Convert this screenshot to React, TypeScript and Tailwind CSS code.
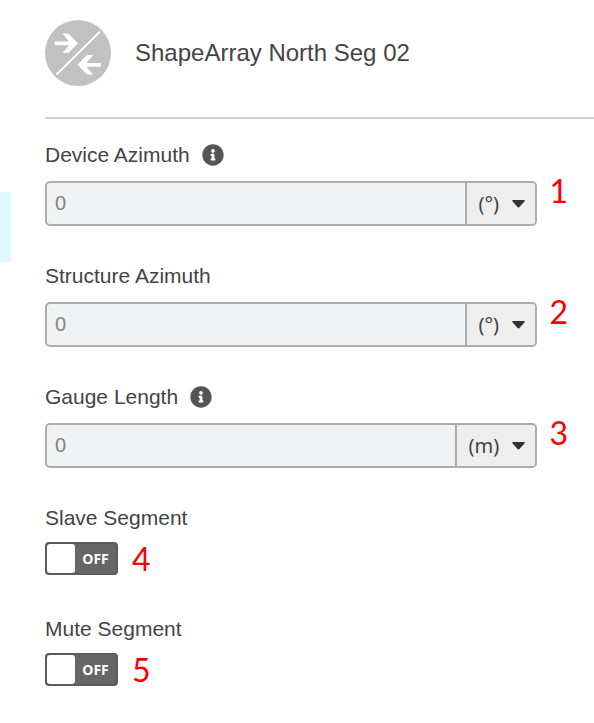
import { useState } from "react";
import { FaInfoCircle } from "react-icons/fa";

type NumberField = {
  id: string;
  label: string;
  unit: string;
  info?: boolean;
  step: string;
};

const FIELDS: NumberField[] = [
  { id: "device-azimuth", label: "Device Azimuth", unit: "(°)", info: true, step: "1" },
  { id: "structure-azimuth", label: "Structure Azimuth", unit: "(°)", step: "2" },
  { id: "gauge-length", label: "Gauge Length", unit: "(m)", info: true, step: "3" },
];

const TOGGLES = [
  { id: "slave-segment", label: "Slave Segment", step: "4" },
  { id: "mute-segment", label: "Mute Segment", step: "5" },
];

function SegmentIcon() {
  return (
    <svg viewBox="0 0 66 66" className="size-[66px] shrink-0" aria-hidden="true">
      <circle cx="33" cy="33" r="33" fill="#c1c1c1" />
      <path d="M11.500 54.500 55 11.500" stroke="#fff" strokeWidth="1.800" />
      <path d="M9.700 21.400h14.300l-6.500-8h6L33 23.300l-9.500 9.700h-6l6.500-7.800H9.700z" fill="#fff" />
      <path d="M56 42.900H41.500l6.500-8h-6L32.500 44.800 42 54.500h6l-6.500-7.800H56z" fill="#fff" />
    </svg>
  );
}

// Red callout number that refers to the manual's step list
function Callout({ children }: { children: string }) {
  return (
    <span className="shrink-0 font-['Lato',sans-serif] text-[32px] leading-5 text-[#ff0000]">
      {children}
    </span>
  );
}

function UnitField({ field }: { field: NumberField }) {
  const [value, setValue] = useState("0");

  return (
    <div>
      <div className="flex items-center gap-3">
        <label htmlFor={field.id} className="text-[21px] leading-7">
          {field.label}
        </label>
        {field.info && <FaInfoCircle size={22} className="text-[#555]" />}
      </div>

      <div className="mt-3 flex items-start gap-3">
        <div className="flex h-[45px] min-w-0 flex-1 rounded-[5px] border-2 border-[#adadad] bg-[#eff3f4]">
          <input
            id={field.id}
            value={value}
            onChange={(e) => setValue(e.target.value)}
            className="min-w-0 flex-1 px-2 pb-0.5 text-[20px] text-[#858585] outline-none"
          />
          <div className="relative flex border-l-2 border-[#adadad]">
            <select
              aria-label={`${field.label} unit`}
              className="appearance-none rounded-r-[3px] bg-[#eee] pr-[36px] pl-[11px] font-['Noto_Sans',sans-serif] text-[20px] outline-none"
            >
              <option>{field.unit}</option>
            </select>
            <svg
              viewBox="0 0 13 8"
              className="pointer-events-none absolute top-[17px] right-[10px] h-2 w-[13px]"
              aria-hidden="true"
            >
              <path d="M1 0h11q1.500 0 .5 1.200L7.500 7q-1 .9-2 0L.5 1.200Q-.5 0 1 0z" fill="#333" />
            </svg>
          </div>
        </div>
        <Callout>{field.step}</Callout>
      </div>
    </div>
  );
}

function ToggleField({ id, label, step }: { id: string; label: string; step: string }) {
  const [on, setOn] = useState(false);

  return (
    <div className="pb-1">
      <label htmlFor={id} className="text-[21px] leading-7">
        {label}
      </label>
      <div className="mt-[10px] flex items-center gap-[14px]">
        <label
          className={`relative flex h-[33px] w-[73px] items-center rounded-[4px] border-2 border-[#5c5c5c] bg-[#666] ${
            on ? "flex-row-reverse" : ""
          }`}
        >
          <input
            id={id}
            type="checkbox"
            checked={on}
            onChange={(e) => setOn(e.target.checked)}
            className="peer sr-only"
          />
          <span className="h-full w-7 rounded-[3px] bg-white" />
          <span className="flex-1 text-center font-['Open_Sans',sans-serif] text-[14px] font-bold text-white">
            {on ? "ON" : "OFF"}
          </span>
        </label>
        <Callout>{step}</Callout>
      </div>
    </div>
  );
}

export default function App() {
  return (
    <div className="flex min-h-screen bg-white font-['Liberation_Sans',Arial,sans-serif] text-[#444]">
      <aside className="w-[11px] shrink-0 pt-48">
        <div className="h-[70px] bg-[#e0f9ff]" />
      </aside>

      <main className="min-w-0 flex-1 pt-5 pb-6 pl-[34px]">
        <header className="flex items-center gap-6 border-b-2 border-[#d0d0d0] pb-[31px]">
          <SegmentIcon />
          <h1 className="text-2xl">ShapeArray North Seg 02</h1>
        </header>

        <form className="flex flex-col gap-9 pt-[22px] pr-[26px]">
          {FIELDS.map((field) => (
            <UnitField key={field.id} field={field} />
          ))}
          {TOGGLES.map((toggle) => (
            <ToggleField key={toggle.id} {...toggle} />
          ))}
        </form>
      </main>
    </div>
  );
}
